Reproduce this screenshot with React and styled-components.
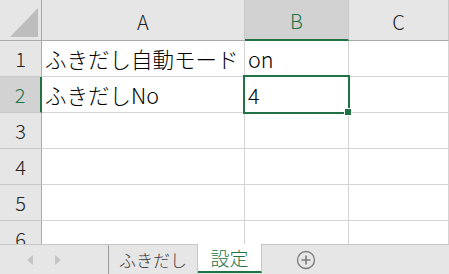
import styled, { createGlobalStyle } from 'styled-components';

const GlobalStyle = createGlobalStyle`
  html, body {
    margin: 0;
    padding: 0;
    background: #fff;
  }
  body {
    font-family: "Noto Sans CJK JP", "Noto Sans", sans-serif;
    color: #000;
  }
`;

const GREEN = '#217346';

const columns = ['A', 'B', 'C'];
const rows = [
  ['ふきだし自動モード', 'on', ''],
  ['ふきだしNo', '4', ''],
  ['', '', ''],
  ['', '', ''],
  ['', '', ''],
  ['', '', ''],
];
const selected = { row: 1, col: 1 };

export default function App() {
  return (
    <Window>
      <GlobalStyle />
      <Sheet>
        <Grid>
          <Corner>
            <CornerMark />
          </Corner>
          {columns.map((c, i) => (
            <ColHeader key={c} $active={i === selected.col}>
              {c}
            </ColHeader>
          ))}
          {rows.map((cells, r) => [
            <RowHeader key={`h${r}`} $active={r === selected.row}>
              {r + 1}
            </RowHeader>,
            ...cells.map((v, c) => {
              const isSel = r === selected.row && c === selected.col;
              return (
                <Cell key={`${r}-${c}`}>
                  {v}
                  {isSel && (
                    <Selection>
                      <Handle />
                    </Selection>
                  )}
                </Cell>
              );
            }),
          ])}
        </Grid>
      </Sheet>
      <TabBar>
        <Nav>
          <Arrow $dir="left" />
          <Arrow $dir="right" />
        </Nav>
        <Tab $width={89}>ふきだし</Tab>
        <Tab $width={64} $active>設定</Tab>
        <AddSheet>
          <svg width="20" height="20" viewBox="0 0 20 20">
            <circle cx="10" cy="10" r="8.5" fill="none" stroke="#7b7b7b" strokeWidth="1.3" />
            <path d="M10 5.5v9M5.5 10h9" stroke="#7b7b7b" strokeWidth="1.6" />
          </svg>
        </AddSheet>
      </TabBar>
    </Window>
  );
}

const Window = styled.div`
  width: 449px;
  height: 274px;
  display: flex;
  flex-direction: column;
  overflow: hidden;
`;

const Sheet = styled.div`
  height: 247px;
  overflow: hidden;
`;

const Grid = styled.div`
  display: grid;
  grid-template-columns: 42px 203px 104px 1fr;
  grid-template-rows: 41px repeat(6, 36px);
`;

const Corner = styled.div`
  background: #e6e6e6;
  border-right: 1px solid #ababab;
  border-bottom: 1px solid #ababab;
  position: relative;
`;

const CornerMark = styled.div`
  position: absolute;
  left: 10px;
  top: 8px;
  width: 28px;
  height: 29px;
  background: #bdbdbd;
  clip-path: polygon(100% 0, 100% 100%, 0 100%);
`;

const ColHeader = styled.div`
  box-sizing: border-box;
  display: flex;
  align-items: center;
  justify-content: center;
  padding-top: 2px;
  font-size: 20px;
  font-weight: 300;
  background: ${p => (p.$active ? '#d2d2d2' : '#e6e6e6')};
  color: ${p => (p.$active ? GREEN : '#222')};
  border-right: 1px solid #c8c8c8;
  border-bottom: ${p => (p.$active ? `2px solid ${GREEN}` : '1px solid #ababab')};
`;

const RowHeader = styled.div`
  box-sizing: border-box;
  display: flex;
  align-items: center;
  justify-content: center;
  font-size: 20px;
  font-weight: 300;
  background: ${p => (p.$active ? '#d2d2d2' : '#e6e6e6')};
  color: ${p => (p.$active ? GREEN : '#222')};
  border-right: ${p => (p.$active ? `2px solid ${GREEN}` : '1px solid #ababab')};
  border-bottom: 1px solid #c8c8c8;
`;

const Cell = styled.div`
  position: relative;
  box-sizing: border-box;
  display: flex;
  align-items: center;
  padding: 0 3px;
  font-size: 21.5px;
  font-weight: 300;
  white-space: nowrap;
  border-right: 1px solid #d4d4d4;
  border-bottom: 1px solid #d4d4d4;
`;

const Selection = styled.div`
  position: absolute;
  left: -2px;
  top: -2px;
  right: -2px;
  bottom: -2px;
  border: 2px solid ${GREEN};
  z-index: 2;
  pointer-events: none;
`;

const Handle = styled.div`
  position: absolute;
  right: -4px;
  bottom: -4px;
  width: 6px;
  height: 6px;
  background: ${GREEN};
  border: 1px solid #fff;
`;

const TabBar = styled.div`
  flex: 1;
  display: flex;
  align-items: stretch;
  background: #e6e6e6;
  border-top: 1px solid #c6c6c6;
`;

const Nav = styled.div`
  width: 109px;
  display: flex;
  align-items: center;
  gap: 22px;
  padding-left: 27px;
  box-sizing: border-box;
  border-right: 1px solid #9c9c9c;
`;

const Arrow = styled.div`
  width: 0;
  height: 0;
  border-top: 5px solid transparent;
  border-bottom: 5px solid transparent;
  ${p =>
    p.$dir === 'left'
      ? 'border-right: 6px solid #c4c4c4;'
      : 'border-left: 6px solid #c4c4c4;'}
`;

const Tab = styled.div`
  box-sizing: border-box;
  width: ${p => p.$width}px;
  display: flex;
  align-items: center;
  justify-content: center;
  font-size: ${p => (p.$active ? 19 : 17)}px;
  font-weight: 300;
  color: ${p => (p.$active ? GREEN : '#404040')};
  background: ${p => (p.$active ? '#fff' : 'transparent')};
  border-right: 1px solid #c6c6c6;
  margin-top: ${p => (p.$active ? '-1px' : '0')};
  border-bottom: ${p => (p.$active ? `2px solid ${GREEN}` : '0')};
  margin-bottom: ${p => (p.$active ? '1px' : '0')};
`;

const AddSheet = styled.div`
  display: flex;
  align-items: center;
  margin-left: 34px;
`;
